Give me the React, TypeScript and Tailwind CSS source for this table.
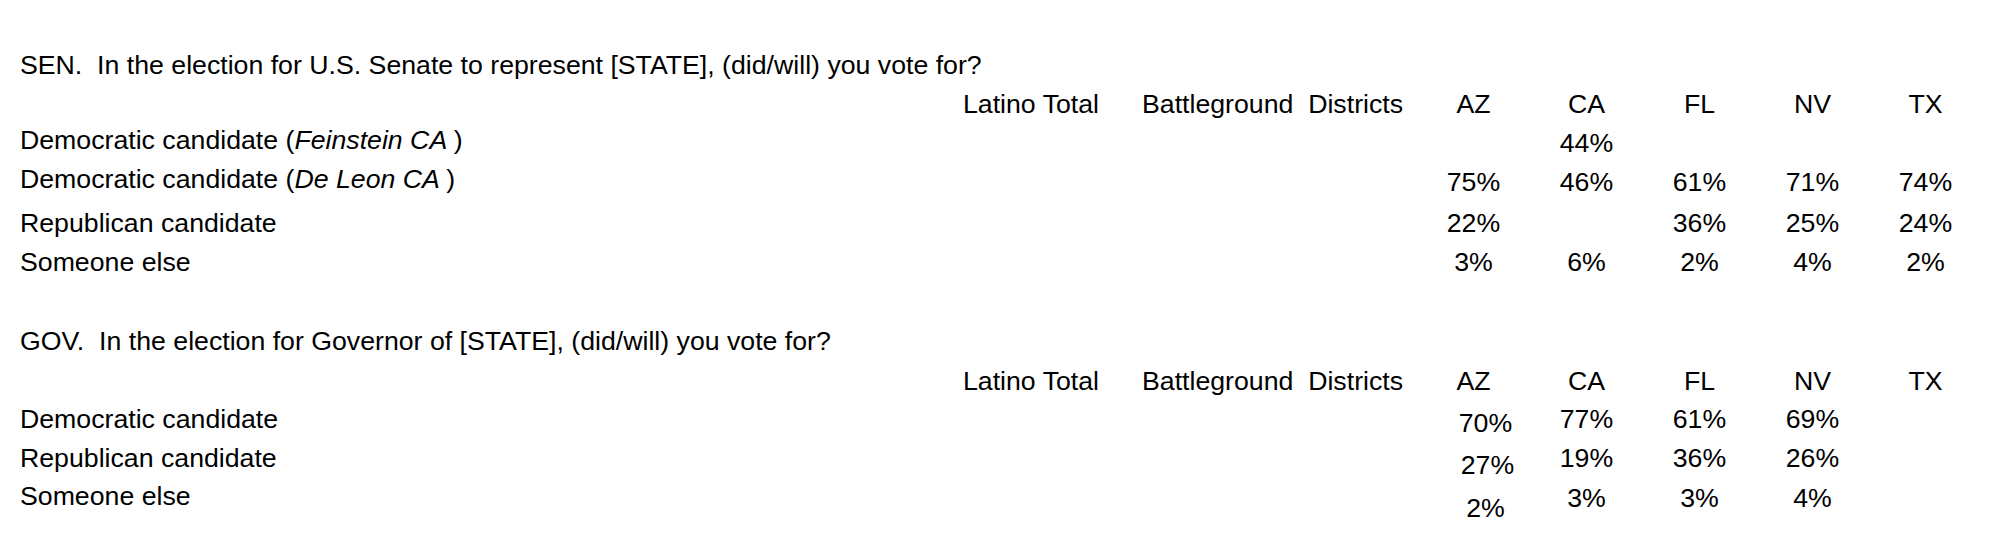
import React from 'react';

const STATES = ['AZ', 'CA', 'FL', 'NV', 'TX'];

type Cell = { v: string; cls?: string };

interface RowProps {
  label: React.ReactNode;
  cells?: Cell[];
  h: string;
}

const GRID = 'grid grid-cols-[943px_179px_275px_repeat(5,113px)]';

function HeaderRow({ h }: { h: string }) {
  return (
    <div className={`${GRID} ${h}`}>
      <div />
      <div>Latino Total</div>
      <div className="whitespace-pre">Battleground  Districts</div>
      {STATES.map((s) => (
        <div key={s} className="text-center">
          {s}
        </div>
      ))}
    </div>
  );
}

function DataRow({ label, cells = [], h }: RowProps) {
  return (
    <div className={`${GRID} ${h}`}>
      <div className="whitespace-pre">{label}</div>
      <div />
      <div />
      {STATES.map((s, i) => (
        <div key={s} className={`text-center ${cells[i]?.cls ?? ''}`}>
          {cells[i]?.v ?? ''}
        </div>
      ))}
    </div>
  );
}

export default function App() {
  return (
    <div
      className="w-[2004px] h-[553px] bg-white text-black text-[26.7px] leading-[38px] pl-[20px] pt-[46px] overflow-hidden"
      style={{ fontFamily: '"Liberation Sans", Arial, sans-serif' }}
    >
      {/* SEN */}
      <div className="whitespace-pre h-[39px]">
        SEN.  In the election for U.S. Senate to represent [STATE], (did/will) you vote for?
      </div>
      <HeaderRow h="h-[36px]" />
      <DataRow
        h="h-[39px]"
        label={
          <>
            Democratic candidate (<i>Feinstein CA </i>)
          </>
        }
        cells={[{ v: '' }, { v: '44%', cls: 'pt-[3px]' }]}
      />
      <DataRow
        h="h-[44px]"
        label={
          <>
            Democratic candidate (<i>De Leon CA </i>)
          </>
        }
        cells={[
          { v: '75%', cls: 'pt-[3px]' },
          { v: '46%', cls: 'pt-[3px]' },
          { v: '61%', cls: 'pt-[3px]' },
          { v: '71%', cls: 'pt-[3px]' },
          { v: '74%', cls: 'pt-[3px]' },
        ]}
      />
      <DataRow
        h="h-[39px]"
        label="Republican candidate"
        cells={[{ v: '22%' }, { v: '' }, { v: '36%' }, { v: '25%' }, { v: '24%' }]}
      />
      <DataRow
        h="h-[79px]"
        label="Someone else"
        cells={[{ v: '3%' }, { v: '6%' }, { v: '2%' }, { v: '4%' }, { v: '2%' }]}
      />

      {/* GOV */}
      <div className="whitespace-pre h-[40px]">
        GOV.  In the election for Governor of [STATE], (did/will) you vote for?
      </div>
      <HeaderRow h="h-[38px]" />
      <DataRow
        h="h-[39px]"
        label="Democratic candidate"
        cells={[
          { v: '70%', cls: 'pt-[4px] pl-[24px]' },
          { v: '77%' },
          { v: '61%' },
          { v: '69%' },
        ]}
      />
      <DataRow
        h="h-[38px]"
        label="Republican candidate"
        cells={[
          { v: '27%', cls: 'pt-[7px] pl-[28px]' },
          { v: '19%' },
          { v: '36%' },
          { v: '26%' },
        ]}
      />
      <DataRow
        h="h-[38px]"
        label="Someone else"
        cells={[
          { v: '2%', cls: 'pt-[12px] pl-[24px]' },
          { v: '3%', cls: 'pt-[2px]' },
          { v: '3%', cls: 'pt-[2px]' },
          { v: '4%', cls: 'pt-[2px]' },
        ]}
      />
    </div>
  );
}
